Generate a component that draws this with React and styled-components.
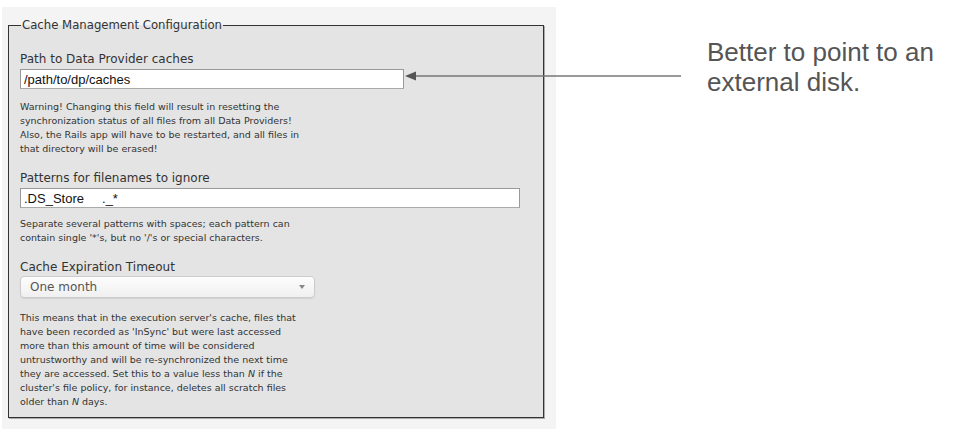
import React from "react";
import styled, { createGlobalStyle } from "styled-components";

const GlobalStyle = createGlobalStyle`
  body {
    margin: 0;
    background: #fff;
    font-family: "DejaVu Sans", Verdana, sans-serif;
  }
`;

const Page = styled.div`
  position: relative;
  width: 954px;
  height: 443px;
  padding: 7px 0 0 2px;
  box-sizing: border-box;
`;

const Panel = styled.div`
  width: 554px;
  height: 422px;
  box-sizing: border-box;
  background: #f4f4f4;
  padding: 11px 12px 11px 6px;
`;

const Fieldset = styled.fieldset`
  margin: 0;
  height: 100%;
  box-sizing: border-box;
  border: 1px solid #333;
  box-shadow: 1px 1px 0 #aaa;
  background: #e4e4e4;
  padding: 10px 11px 0 11px;
`;

const Legend = styled.legend`
  margin-left: 1px;
  padding: 0 1px;
  font-size: 11.7px;
  color: #333;
`;

const Label = styled.label`
  display: block;
  font-size: 12px;
  color: #333;
  margin-top: ${props => props.top || 0}px;
  line-height: 15px;
`;

const TextInput = styled.input`
  display: block;
  width: ${props => props.w}px;
  height: 20px;
  box-sizing: border-box;
  margin: 2px 0 0 0;
  padding: 0 3px;
  border: 1px solid #999;
  border-bottom-color: #aaa;
  background: #fff;
  font-family: "Liberation Sans", Arial, sans-serif;
  font-size: 13px;
  color: #111;
  white-space: pre;
`;

const Help = styled.p`
  margin: ${props => props.top || 8}px 0 0 0;
  font-size: 9.5px;
  line-height: 14px;
  color: #333;
  width: ${props => props.w || 290}px;
`;

const Select = styled.div`
  display: flex;
  align-items: center;
  justify-content: space-between;
  width: 295px;
  height: 22px;
  box-sizing: border-box;
  margin-top: 1px;
  padding: 0 9px 0 9px;
  border: 1px solid #ccc;
  border-radius: 4px;
  background: linear-gradient(#fdfdfd, #f0f0f0);
  box-shadow: 0 1px 1px rgba(0, 0, 0, 0.08);
  font-size: 12px;
  color: #555;
`;

const Caret = styled.span`
  width: 0;
  height: 0;
  border-left: 3px solid transparent;
  border-right: 3px solid transparent;
  border-top: 4px solid #888;
`;

const Callout = styled.svg`
  position: absolute;
  left: 403px;
  top: 70px;
`;

const Note = styled.div`
  position: absolute;
  left: 707px;
  top: 37px;
  font-family: "Liberation Sans", Arial, sans-serif;
  font-size: 26px;
  line-height: 30px;
  color: #555;
`;

export default function App() {
  return (
    <Page>
      <GlobalStyle />
      <Panel>
        <Fieldset>
          <Legend>Cache Management Configuration</Legend>
          <Label top={10}>Path to Data Provider caches</Label>
          <TextInput w={384} defaultValue="/path/to/dp/caches" />
          <Help top={11}>
            Warning! Changing this field will result in resetting the
            synchronization status of all files from all Data Providers!
            Also, the Rails app will have to be restarted, and all files in
            that directory will be erased!
          </Help>
          <Label top={15}>Patterns for filenames to ignore</Label>
          <TextInput w={500} defaultValue={".DS_Store     ._*"} />
          <Help top={9}>
            Separate several patterns with spaces; each pattern can contain
            single '*'s, but no '/'s or special characters.
          </Help>
          <Label top={15}>Cache Expiration Timeout</Label>
          <Select>
            One month
            <Caret />
          </Select>
          <Help top={13} w={285}>
            This means that in the execution server's cache, files that have
            been recorded as 'InSync' but were last accessed more than this
            amount of time will be considered untrustworthy and will be
            re-synchronized the next time they are accessed. Set this to a
            value less than <i>N</i> if the cluster's file policy, for
            instance, deletes all scratch files older than <i>N</i> days.
          </Help>
        </Fieldset>
      </Panel>
      <Callout width="280" height="12" viewBox="0 0 280 12">
        <line x1="10" y1="6" x2="278" y2="6" stroke="#777" strokeWidth="1.5" />
        <polygon points="2,6 13,1.5 13,10.5" fill="#555" />
      </Callout>
      <Note>
        Better to point to an
        <br />
        external disk.
      </Note>
    </Page>
  );
}
